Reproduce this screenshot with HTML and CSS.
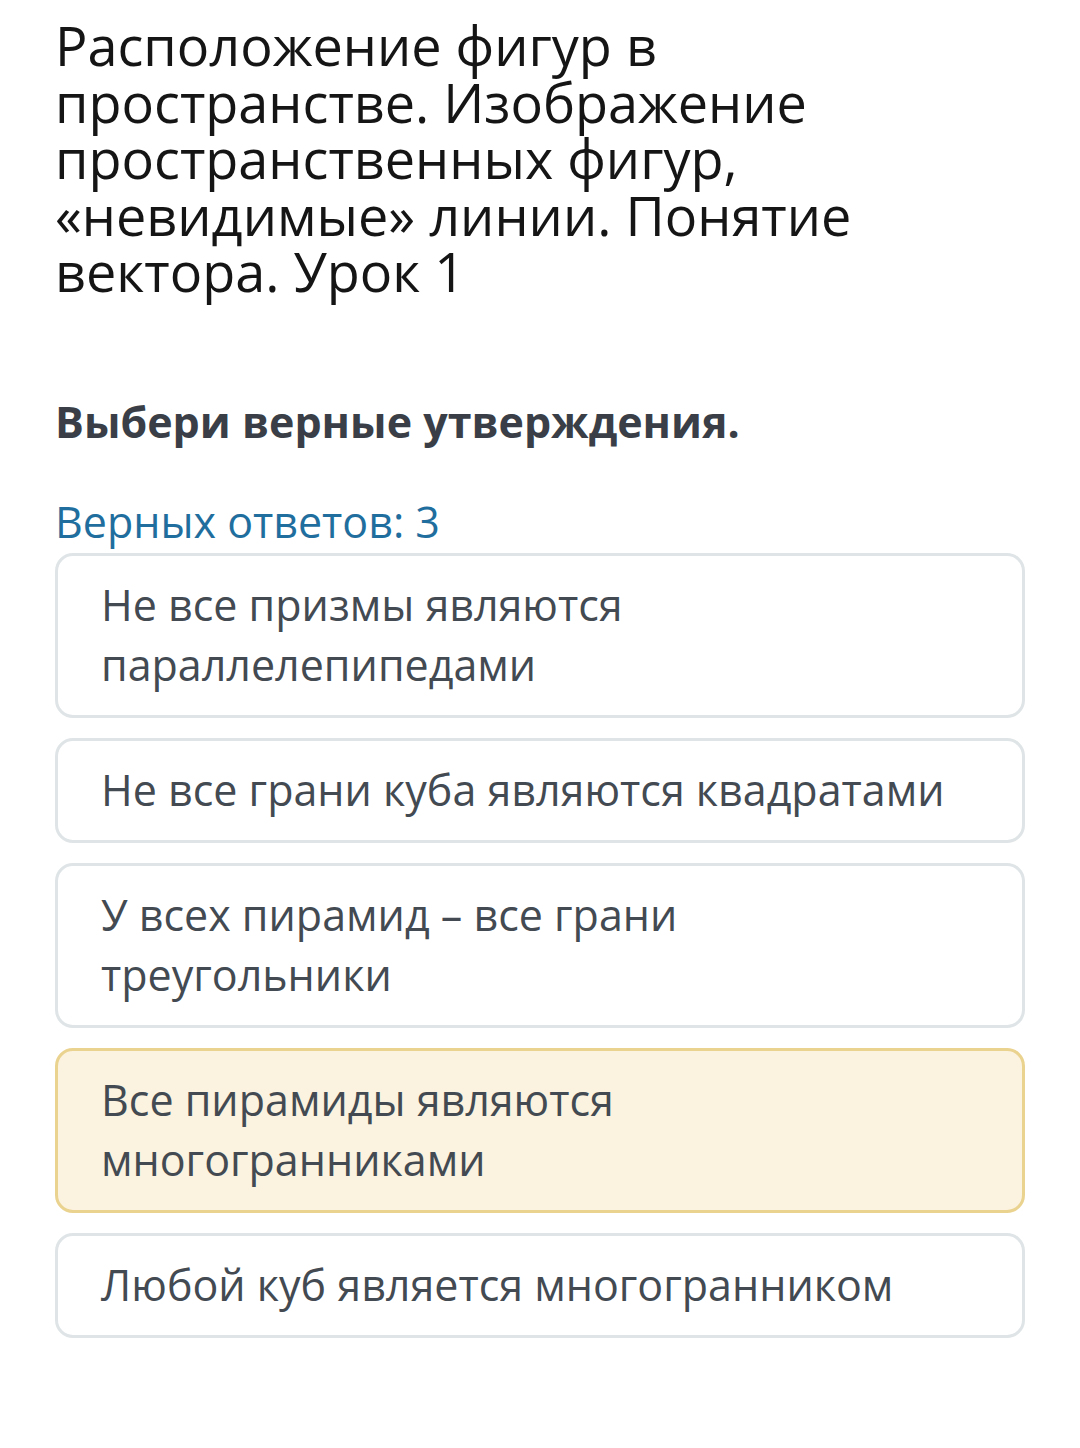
FILE: index.html
```html
<!DOCTYPE html>
<html lang="ru">
<head>
    <meta charset="UTF-8" />
    <title>Расположение фигур в пространстве</title>
    <link rel="stylesheet" href="styles.css">
</head>
<body>
    <div class="lesson">
        <h1 class="lesson-title">Расположение фигур в пространстве. Изображение пространственных фигур, «невидимые» линии. Понятие вектора. Урок 1</h1>

        <h2 class="question">Выбери верные утверждения.</h2>

        <p class="answer-count">Верных ответов: 3</p>

        <div class="options">
            <div class="option">Не все призмы являются параллелепипедами</div>
            <div class="option">Не все грани куба являются квадратами</div>
            <div class="option">У всех пирамид – все грани треугольники</div>
            <div class="option selected">Все пирамиды являются многогранниками</div>
            <div class="option">Любой куб является многогранником</div>
        </div>
    </div>
</body>
</html>
```

FILE: styles.css
```css
body {
    margin: 0;
    background-color: #fff;
    font-family: "Open Sans", "Noto Sans", sans-serif;
}
.lesson {
    padding: 17px 55px 40px 55px;
}
.lesson-title {
    margin: 0;
    font-size: 54px;
    font-weight: 400;
    line-height: 56.5px;
    color: #151515;
}
.question {
    margin: 98px 0 0 0;
    font-size: 43px;
    font-weight: 700;
    line-height: 48px;
    color: #3a3f47;
}
.answer-count {
    margin: 48px 0 4px 0;
    font-size: 43px;
    line-height: 55px;
    color: #1f6e9e;
}
.options {
    display: flex;
    flex-direction: column;
    gap: 20px;
}
.option {
    padding: 19.5px 60px 19.5px 43px;
    border: 3px solid #dfe4e6;
    border-radius: 18px;
    font-size: 43px;
    line-height: 60px;
    color: #434a52;
    background-color: #fff;
}
.option.selected {
    background-color: #fbf2df;
    border-color: #ead28f;
}
```
